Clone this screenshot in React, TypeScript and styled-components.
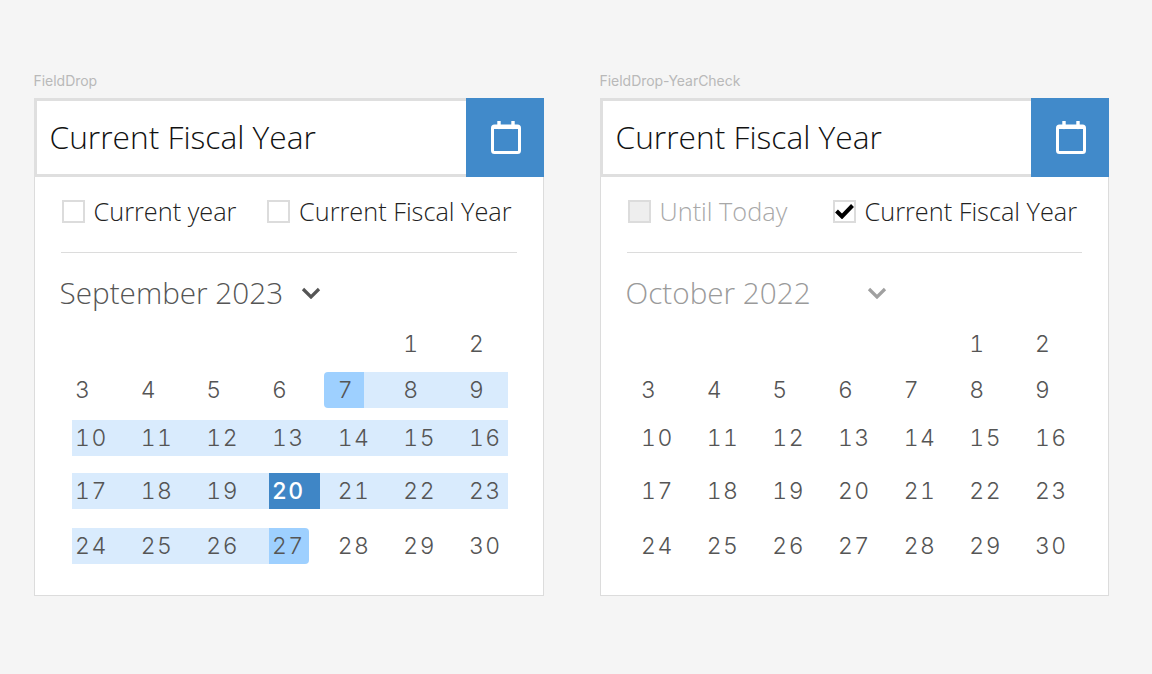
import styled, { createGlobalStyle } from 'styled-components';

const GlobalStyle = createGlobalStyle`
  html, body {
    margin: 0;
    padding: 0;
    height: 100%;
    background: #f5f5f5;
    font-family: "Open Sans", sans-serif;
  }
`;

const Page = styled.div`
  display: flex;
  gap: 56px;
  padding: 72px 0 0 33.5px;
`;

const Column = styled.section<{ $width: number }>`
  width: ${(p) => p.$width}px;
`;

const Caption = styled.div`
  height: 26px;
  font-family: Inter, sans-serif;
  font-size: 14px;
  line-height: 17px;
  letter-spacing: -0.03px;
  color: #b9b9b9;
`;

const Field = styled.div`
  display: flex;
  height: 79px;
`;

const FieldInput = styled.div`
  flex: 1;
  box-sizing: border-box;
  display: flex;
  align-items: center;
  padding: 0 0 2px 13px;
  background: #fff;
  border: solid #dfdfdf;
  border-width: 3px 0 3px 3px;
  font-size: 31.7px;
  font-weight: 300;
  color: #111;
`;

const FieldButton = styled.div`
  width: 78px;
  box-sizing: border-box;
  padding-left: 2px;
  display: flex;
  align-items: center;
  justify-content: center;
  background: #418aca;
`;

const Body = styled.div`
  box-sizing: border-box;
  height: 419px;
  padding: 0 26px;
  background: #fff;
  border: solid #dcdcdc;
  border-width: 0 1px 1px 1px;
`;

const Options = styled.div`
  box-sizing: border-box;
  display: flex;
  align-items: center;
  height: 76px;
  padding-bottom: 7px;
  border-bottom: 1px solid #dcdcdc;
`;

const Option = styled.label<{ $width?: number; $muted?: boolean }>`
  display: flex;
  align-items: center;
  gap: 9px;
  width: ${(p) => (p.$width ? `${p.$width}px` : 'auto')};
  margin-left: 1px;
  font-size: 25.3px;
  font-weight: 300;
  white-space: nowrap;
  color: ${(p) => (p.$muted ? '#a8a8a8' : '#222')};
`;

const Box = styled.span<{ $disabled?: boolean }>`
  box-sizing: border-box;
  width: 23px;
  height: 23px;
  display: flex;
  align-items: center;
  justify-content: center;
  border: 2px solid #dcdcdc;
  background: ${(p) => (p.$disabled ? '#eeeeee' : '#fff')};
`;

const MonthRow = styled.div`
  box-sizing: border-box;
  display: flex;
  align-items: center;
  height: 73px;
  padding-top: 6px;
`;

const MonthName = styled.div<{ $muted?: boolean }>`
  width: 241px;
  margin-left: -1px;
  font-size: 29.7px;
  font-weight: 300;
  color: ${(p) => (p.$muted ? '#9a9a9a' : '#555')};
`;

const Weeks = styled.div`
  margin-left: 11.5px;
`;

const Week = styled.div<{ $gap: number }>`
  display: grid;
  grid-template-columns: repeat(6, 65.67px) 42px;
  height: 36px;
  margin-top: ${(p) => p.$gap}px;
`;

type Mark = 'range' | 'start' | 'selected' | 'end';

const Day = styled.div<{ $mark?: Mark }>`
  position: relative;
  display: flex;
  align-items: center;
  padding-left: 3px;
  font-family: Inter, sans-serif;
  font-size: 23px;
  font-feature-settings: 'tnum';
  letter-spacing: 1.5px;
  white-space: nowrap;
  color: ${(p) => (p.$mark === 'selected' ? '#fff' : '#555')};
  font-weight: ${(p) => (p.$mark === 'selected' ? 500 : 300)};
  background: ${(p) => (p.$mark && p.$mark !== 'end' ? '#d9ebfd' : 'transparent')};

  &::before {
    content: '';
    display: ${(p) => (p.$mark && p.$mark !== 'range' ? 'block' : 'none')};
    position: absolute;
    top: 0;
    bottom: 0;
    left: ${(p) => (p.$mark === 'start' ? '-10.67px' : '0')};
    width: ${(p) => (p.$mark === 'selected' ? '51px' : '40px')};
    background: ${(p) => (p.$mark === 'selected' ? '#3f86c6' : '#9ed0ff')};
    border-radius: ${(p) =>
      p.$mark === 'start' ? '4px 0 0 4px' : p.$mark === 'end' ? '0 4px 4px 0' : '0'};
  }
`;

const DayText = styled.span`
  position: relative;
`;

const CalendarIcon = () => (
  <svg width="30" height="33" viewBox="0 0 30 33" fill="none">
    <rect x="1.5" y="5" width="27" height="26.5" rx="2" stroke="#fff" strokeWidth="3" />
    <rect x="1.5" y="5" width="27" height="3" fill="#fff" />
    <path d="M8 0.5v6M22 0.5v6" stroke="#fff" strokeWidth="3.4" strokeLinecap="round" />
  </svg>
);

const Chevron = ({ color }: { color: string }) => (
  <svg width="20" height="12" viewBox="0 0 20 12" fill="none">
    <path d="M2 2l8 8 8-8" stroke={color} strokeWidth="3.2" />
  </svg>
);

const CheckMark = () => (
  <svg width="19" height="16" viewBox="0 0 19 16" fill="none">
    <path d="M1.5 8l5.5 5.5L17.5 2.5" stroke="#000" strokeWidth="4" />
  </svg>
);

const gaps = [0, 10, 12, 17, 19];

const weeks: (number | null)[][] = [
  [null, null, null, null, null, 1, 2],
  [3, 4, 5, 6, 7, 8, 9],
  [10, 11, 12, 13, 14, 15, 16],
  [17, 18, 19, 20, 21, 22, 23],
  [24, 25, 26, 27, 28, 29, 30],
];

function markFor(day: number | null): Mark | undefined {
  if (day === null || day < 7 || day > 27) return undefined;
  if (day === 7) return 'start';
  if (day === 20) return 'selected';
  if (day === 27) return 'end';
  return 'range';
}

function Calendar({ marked }: { marked?: boolean }) {
  return (
    <Weeks>
      {weeks.map((week, i) => (
        <Week key={i} $gap={gaps[i]}>
          {week.map((day, j) => (
            <Day key={j} $mark={marked ? markFor(day) : undefined}>
              <DayText>{day}</DayText>
            </Day>
          ))}
        </Week>
      ))}
    </Weeks>
  );
}

function Header() {
  return (
    <Field>
      <FieldInput>Current Fiscal Year</FieldInput>
      <FieldButton>
        <CalendarIcon />
      </FieldButton>
    </Field>
  );
}

export default function App() {
  return (
    <>
      <GlobalStyle />
      <Page>
        <Column $width={510}>
          <Caption>FieldDrop</Caption>
          <Header />
          <Body>
            <Options>
              <Option $width={204.5}>
                <Box />
                Current year
              </Option>
              <Option>
                <Box />
                Current Fiscal Year
              </Option>
            </Options>
            <MonthRow>
              <MonthName>September 2023</MonthName>
              <Chevron color="#555" />
            </MonthRow>
            <Calendar marked />
          </Body>
        </Column>
        <Column $width={509.5}>
          <Caption>FieldDrop-YearCheck</Caption>
          <Header />
          <Body>
            <Options>
              <Option $width={204} $muted>
                <Box $disabled />
                Until Today
              </Option>
              <Option>
                <Box>
                  <CheckMark />
                </Box>
                Current Fiscal Year
              </Option>
            </Options>
            <MonthRow>
              <MonthName $muted>October 2022</MonthName>
              <Chevron color="#a0a0a0" />
            </MonthRow>
            <Calendar />
          </Body>
        </Column>
      </Page>
    </>
  );
}
